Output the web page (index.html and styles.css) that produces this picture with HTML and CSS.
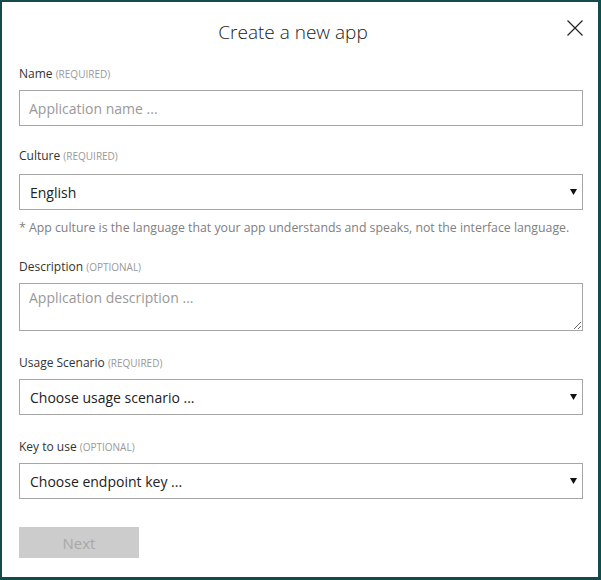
FILE: index.html
```html
<!DOCTYPE html>
<html lang="en">
<head>
<meta charset="utf-8">
<title>Create a new app</title>
<link rel="stylesheet" href="styles.css">
</head>
<body>
<div class="dialog">
  <div class="header">
    <h1 class="title">Create a new app</h1>
    <button class="close" type="button" aria-label="Close">
      <svg width="16" height="16" viewBox="0 0 16 16"><path d="M0.5 0.5 L15.5 15.5 M15.5 0.5 L0.5 15.5" stroke="#222" stroke-width="1.2" fill="none"/></svg>
    </button>
  </div>

  <div class="group first">
    <label class="label">Name <span class="note">(REQUIRED)</span></label>
    <input class="field" type="text" placeholder="Application name ...">
  </div>

  <div class="group">
    <label class="label wide">Culture <span class="note">(REQUIRED)</span></label>
    <div class="select">
      <select class="field sel"><option>English</option></select>
      <svg class="arrow" width="7" height="6" viewBox="0 0 7 6"><path d="M0 0 H7 L3.5 6 Z" fill="#111"/></svg>
    </div>
    <p class="hint">* App culture is the language that your app understands and speaks, not the interface language.</p>
  </div>

  <div class="group desc">
    <label class="label">Description <span class="note">(OPTIONAL)</span></label>
    <textarea class="field area" placeholder="Application description ..."></textarea>
  </div>

  <div class="group usage">
    <label class="label">Usage Scenario <span class="note">(REQUIRED)</span></label>
    <div class="select">
      <select class="field sel"><option>Choose usage scenario ...</option></select>
      <svg class="arrow" width="7" height="6" viewBox="0 0 7 6"><path d="M0 0 H7 L3.5 6 Z" fill="#111"/></svg>
    </div>
  </div>

  <div class="group key">
    <label class="label">Key to use <span class="note">(OPTIONAL)</span></label>
    <div class="select">
      <select class="field sel"><option>Choose endpoint key ...</option></select>
      <svg class="arrow" width="7" height="6" viewBox="0 0 7 6"><path d="M0 0 H7 L3.5 6 Z" fill="#111"/></svg>
    </div>
  </div>

  <button class="next" type="button" disabled>Next</button>
</div>
</body>
</html>
```

FILE: styles.css
```css
html, body {
  margin: 0;
  padding: 0;
  background: #ffffff;
}

body {
  font-family: "Open Sans", "Noto Sans", sans-serif;
  color: #333;
}

.dialog {
  box-sizing: border-box;
  width: 601px;
  height: 580px;
  border-style: solid;
  border-color: #124a4e;
  border-width: 2px 3px 3px 2px;
  padding: 16px 15px 0 17px;
  display: flex;
  flex-direction: column;
  background: #fff;
}

.header {
  display: flex;
  align-items: flex-start;
}

.title {
  flex: 1;
  margin: 2px 0 0 0;
  text-align: center;
  font-size: 19px;
  line-height: 24px;
  font-weight: 300;
  color: #222;
}

.close {
  width: 16px;
  height: 16px;
  padding: 0;
  margin: 2px 0 0 0;
  border: none;
  background: none;
  display: flex;
}

.group {
  display: flex;
  flex-direction: column;
  margin-top: 22px;
}

.group.desc {
  margin-top: 23px;
}

.group.usage {
  margin-top: 24px;
}

.group.key {
  margin-top: 24px;
}

.label {
  font-size: 12px;
  line-height: 16px;
  color: #333;
  margin-bottom: 8px;
}

.label.wide {
  margin-bottom: 10px;
}

.note {
  font-size: 10px;
  color: #999;
}

.field {
  box-sizing: border-box;
  width: 100%;
  margin: 0;
  border: 1px solid #a6a6a6;
  border-radius: 0;
  background: #fff;
  font-family: "Open Sans", "Noto Sans", sans-serif;
  font-size: 14px;
  color: #222;
  outline: none;
}

input.field {
  height: 36px;
  padding: 0 9px;
}

.field::placeholder {
  color: #999;
}

.select {
  display: grid;
  align-items: center;
}

.sel {
  grid-area: 1 / 1;
  height: 36px;
  padding: 0 20px 0 10px;
  appearance: none;
  -webkit-appearance: none;
}

.arrow {
  grid-area: 1 / 1;
  justify-self: end;
  margin-right: 6px;
  pointer-events: none;
}

.hint {
  margin: 10px 0 0 0;
  font-size: 12.3px;
  line-height: 16px;
  color: #808080;
}

.area {
  height: 48px;
  padding: 4px 9px;
  resize: vertical;
  line-height: 20px;
}

.next {
  margin-top: 28px;
  width: 120px;
  height: 31px;
  border: none;
  background: #cccccc;
  color: #a8a8a8;
  font-family: "Open Sans", "Noto Sans", sans-serif;
  font-size: 15px;
  padding: 0;
}
```
